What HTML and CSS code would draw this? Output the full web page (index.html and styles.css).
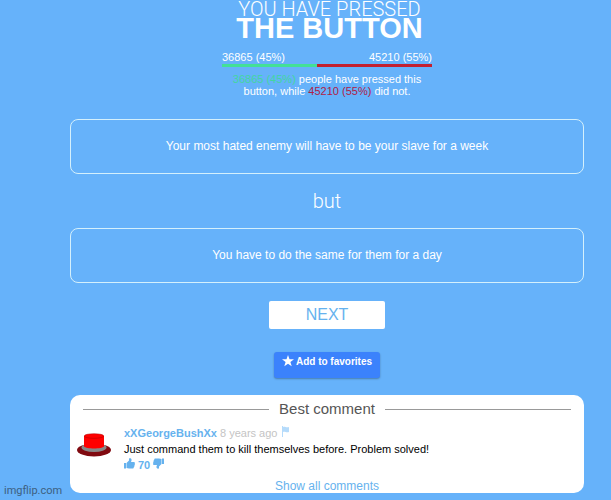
FILE: index.html
```
<!DOCTYPE html>
<html lang="en">
<head>
    <meta charset="UTF-8">
    <title>Will You Press The Button?</title>
    <link rel="stylesheet" href="styles.css">
</head>
<body>
    <main class="container">
        <h1>
            <span class="title-light">YOU HAVE PRESSED</span>
            <span class="title-bold">THE BUTTON</span>
        </h1>

        <section class="stats">
            <div class="counts">
                <span>36865 (45%)</span>
                <span>45210 (55%)</span>
            </div>
            <div class="bar"><div class="bar-yes" style="width: 45%"></div></div>
            <p><span class="yes">36865 (45%)</span> people have pressed this button, while <span class="no">45210 (55%)</span> did not.</p>
        </section>

        <div class="rect">Your most hated enemy will have to be your slave for a week</div>
        <div class="but">but</div>
        <div class="rect">You have to do the same for them for a day</div>

        <button type="button" class="next">NEXT</button>
        <button type="button" class="favorite">
            <svg width="12" height="12" viewBox="0 0 12 12"><path fill="#fff" d="M6 0l1.500 4.200H12L8.400 6.900 9.700 11.300 6 8.700 2.300 11.300 3.600 6.900 0 4.200h4.500z"/></svg>
            Add to favorites
        </button>

        <section class="comments">
            <h2>Best comment</h2>
            <div class="comment">
                <svg class="avatar" width="34" height="24" viewBox="0 0 34 24">
                    <ellipse cx="17" cy="17" rx="17" ry="6.500" fill="#800a10"/>
                    <ellipse cx="17" cy="14.500" rx="12.500" ry="4.500" fill="#888"/>
                    <path fill="#f00" d="M7 3v10.500c2 2.600 18 2.600 20 0V3z"/>
                    <ellipse cx="17" cy="3" rx="9.800" ry="2.300" fill="#f00" stroke="#a00" stroke-width=".5"/>
                </svg>
                <div class="comment-body">
                    <div class="meta">
                        <a href="#" class="author">xXGeorgeBushXx</a>
                        <span class="date">8 years ago</span>
                        <a href="#" class="flag" aria-label="Report"><svg width="9" height="11" viewBox="0 0 9 11"><path fill="#b5dbfb" d="M1 0h1v1c2-1 3 1 6 0v5C5 7 4 5 2 6v5H1z"/></svg></a>
                    </div>
                    <div class="text">Just command them to kill themselves before. Problem solved!</div>
                    <div class="votes">
                        <a href="#" aria-label="Like"><svg width="11" height="11" viewBox="0 0 11 11"><path fill="currentColor" d="M0 5h2v5.500H0zM2.500 5L5 2.500V.5C7 0 7.800 1 7.500 2.500L7 4h3c1.200.2 1.200 1.400.6 2 .5.600.3 1.300-.3 1.600.3.700 0 1.200-.5 1.400.1 1-.4 1.600-1.300 1.600H5L2.500 10z"/></svg></a>
                        <span>70</span>
                        <a href="#" aria-label="Dislike"><svg width="11" height="11" viewBox="0 0 11 11"><path fill="currentColor" transform="rotate(180 5.500 5.500)" d="M0 5h2v5.500H0zM2.500 5L5 2.500V.5C7 0 7.800 1 7.500 2.500L7 4h3c1.200.2 1.200 1.400.6 2 .5.600.3 1.300-.3 1.600.3.700 0 1.200-.5 1.400.1 1-.4 1.600-1.300 1.600H5L2.500 10z"/></svg></a>
                    </div>
                </div>
            </div>
            <a href="#" class="show-all">Show all comments</a>
        </section>
    </main>
    <div class="watermark">imgflip.com</div>
</body>
</html>
```
FILE: styles.css
```
* {
    margin: 0;
    padding: 0;
    box-sizing: border-box;
}

body {
    background-color: #66b2fa;
    color: #fff;
    font-family: "Liberation Sans", Arial, sans-serif;
    font-size: 11px;
}

a {
    color: #66b2ee;
    text-decoration: none;
}

/* Main column */
.container {
    display: flex;
    flex-direction: column;
    align-items: center;
    margin: 0 27px 0 70px;
}

/* Title */
h1 {
    padding-left: 5px;
    text-align: center;
}

h1 span {
    display: block;
}

.title-light {
    font-family: Roboto, sans-serif;
    font-size: 20px;
    font-weight: 300;
    line-height: 18px;
}

.title-bold {
    font-size: 29px;
    line-height: 20px;
}

/* Press statistics */
.stats {
    width: 210px;
    margin-top: 12px;
}

.counts {
    display: flex;
    justify-content: space-between;
    line-height: 14px;
}

.bar {
    height: 3px;
    background-color: #c3202f;
}

.bar-yes {
    height: 3px;
    background-color: #43e097;
}

.stats p {
    margin-top: 6px;
    line-height: 12px;
    text-align: center;
}

.yes {
    color: #43d6a0;
}

.no {
    color: #b02045;
}

/* Dilemma boxes */
.rect {
    width: 100%;
    padding: 19px;
    border: 1px solid #d4f0fc;
    border-radius: 8px;
    font-size: 12px;
    line-height: 15px;
    text-align: center;
}

.stats + .rect {
    margin-top: 22px;
}

.but {
    padding: 15px 0;
    font-family: Roboto, sans-serif;
    font-size: 20px;
    font-weight: 300;
    line-height: 24px;
}

/* Buttons */
button {
    border: none;
    font-family: inherit;
    cursor: pointer;
}

.next {
    margin-top: 18px;
    padding: 5px 37px;
    background-color: #fff;
    border-radius: 2px;
    color: #66b2ee;
    font-size: 16px;
    line-height: 18px;
}

.favorite {
    display: flex;
    gap: 2px;
    margin-top: 23px;
    padding: 3px 8px 9px 8px;
    background-color: #3b82fc;
    border-radius: 3px;
    box-shadow: 0 1px 2px rgba(0, 0, 0, 0.3);
    color: #fff;
    font-size: 10px;
    font-weight: bold;
    line-height: 14px;
}

/* Comments */
.comments {
    width: 100%;
    margin-top: 17px;
    padding: 4px 13px 0 7px;
    background-color: #fff;
    border-radius: 10px;
    color: #000;
}

h2 {
    display: flex;
    align-items: center;
    gap: 10px;
    margin-left: 6px;
    color: #555;
    font-size: 15px;
    font-weight: normal;
    line-height: 20px;
}

h2::before,
h2::after {
    content: "";
    flex: 1;
    height: 1px;
    background-color: #999;
}

.comment {
    display: flex;
    gap: 13px;
    margin-top: 6px;
}

.avatar {
    margin-top: 8px;
}

.comment-body {
    line-height: 16px;
}

.author,
.votes {
    color: #66b2ee;
    font-weight: bold;
}

.votes {
    display: flex;
    gap: 3px;
}

.date {
    color: #c4c4c4;
}

.show-all {
    display: block;
    margin-left: 6px;
    padding-top: 6px;
    font-size: 12px;
    line-height: 14px;
    text-align: center;
}

.watermark {
    position: absolute;
    left: 4px;
    bottom: 2px;
    color: #3d5f80;
    font-family: Roboto, sans-serif;
    font-size: 11px;
    line-height: 14px;
}
```
